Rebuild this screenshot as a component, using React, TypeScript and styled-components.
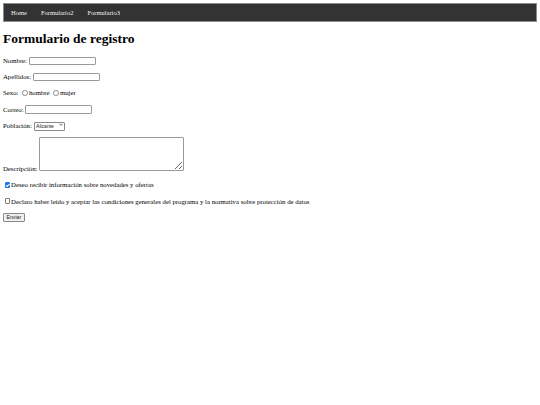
import styled, { createGlobalStyle } from 'styled-components';

const GlobalStyle = createGlobalStyle`
  body {
    margin: 3px;
    font-family: 'Liberation Serif', 'Times New Roman', serif;
    font-size: 6.75px;
    color: #000;
    background: #fff;
  }
`;

const links = ['Home', 'Formulario2', 'Formulario3'];

export default function App() {
  return (
    <>
      <GlobalStyle />
      <Nav>
        {links.map((link) => (
          <NavLink key={link} href="#">
            {link}
          </NavLink>
        ))}
      </Nav>
      <H1>Formulario de registro</H1>
      <form onSubmit={(e) => e.preventDefault()}>
        <Row>
          Nombre: <TextInput type="text" />
        </Row>
        <Row>
          Apellidos: <TextInput type="text" />
        </Row>
        <Row>
          Sexo: <Radio type="radio" name="sexo" />hombre <Radio type="radio" name="sexo" />mujer
        </Row>
        <Row>
          Correo: <TextInput type="email" />
        </Row>
        <Row>
          Población:{' '}
          <SelectWrap>
            <Select defaultValue="Alicante">
              <option>Alicante</option>
              <option>Valencia</option>
              <option>Castellón</option>
            </Select>
            <Chevron viewBox="0 0 8 6" aria-hidden="true">
              <path d="M1 1.5 L4 4.5 L7 1.5" fill="none" stroke="#222" strokeWidth="1.4" />
            </Chevron>
          </SelectWrap>
        </Row>
        <Row>
          Descripción: <TextArea />
        </Row>
        <Row>
          <Check type="checkbox" defaultChecked />
          Deseo recibir información sobre novedades y ofertas
        </Row>
        <Row>
          <Check type="checkbox" />
          Declaro haber leido y aceptar las condiciones generales del programa y la normativa sobre
          protección de datos
        </Row>
        <Button type="submit">Enviar</Button>
      </form>
    </>
  );
}

const Nav = styled.nav`
  display: flex;
  align-items: center;
  height: 17px;
  background-color: #333;
  border: 1px solid #8a8a8a;
`;

const NavLink = styled.a`
  padding: 0 7px;
  color: #f2f2f2;
  text-decoration: none;
  font-size: 6.5px;
`;

const H1 = styled.h1`
  margin: 9px 0;
  font-size: 13.5px;
  font-weight: bold;
`;

const Row = styled.p`
  margin: 6.7px 0;
  line-height: 9.5px;
`;

const TextInput = styled.input`
  box-sizing: border-box;
  width: 67px;
  height: 8.5px;
  padding: 0 1px;
  border: 1px solid #9a9a9a;
  border-radius: 1px;
  font-size: 5.6px;
  vertical-align: baseline;
`;

const Radio = styled.input`
  appearance: none;
  box-sizing: border-box;
  width: 5.5px;
  height: 5.5px;
  margin: 0 1.3px 0 2px;
  border: 0.7px solid #8a8a8a;
  border-radius: 50%;
  background: #fff;
  vertical-align: -0.3px;
`;

const Check = styled.input`
  appearance: none;
  position: relative;
  box-sizing: border-box;
  width: 5.5px;
  height: 5.5px;
  margin: 0 0.8px 0 1.8px;
  border: 0.7px solid #7a7a7a;
  border-radius: 1px;
  background: #fff;
  vertical-align: -0.3px;

  &:checked {
    background: #1a73e8;
    border-color: #1a73e8;
  }

  &:checked::after {
    content: '';
    position: absolute;
    left: 1.4px;
    top: 0.2px;
    width: 1.3px;
    height: 2.8px;
    border: solid #fff;
    border-width: 0 0.8px 0.8px 0;
    transform: rotate(45deg);
  }
`;

const SelectWrap = styled.span`
  position: relative;
  display: inline-block;
  vertical-align: baseline;
`;

const Select = styled.select`
  appearance: none;
  box-sizing: border-box;
  height: 8.5px;
  width: 31px;
  padding: 0 6px 0 1.5px;
  font-size: 5px;
  font-family: 'Liberation Sans', Arial, sans-serif;
  color: #222;
  background: #fff;
  border: 1px solid #8a8a8a;
  border-radius: 1px;
  line-height: 1;
`;

const Chevron = styled.svg`
  position: absolute;
  right: 2px;
  top: 2.4px;
  width: 4px;
  height: 3px;
  pointer-events: none;
`;

const TextArea = styled.textarea`
  box-sizing: border-box;
  width: 145px;
  height: 34px;
  border: 1px solid #9a9a9a;
  border-radius: 1px;
  font-size: 5.6px;
  vertical-align: baseline;
`;

const Button = styled.button`
  box-sizing: border-box;
  height: 8.5px;
  padding: 0 2.5px;
  font-size: 5.2px;
  font-family: 'Liberation Sans', Arial, sans-serif;
  color: #222;
  background: #efefef;
  border: 1px solid #8a8a8a;
  border-radius: 1px;
  line-height: 1;
`;
